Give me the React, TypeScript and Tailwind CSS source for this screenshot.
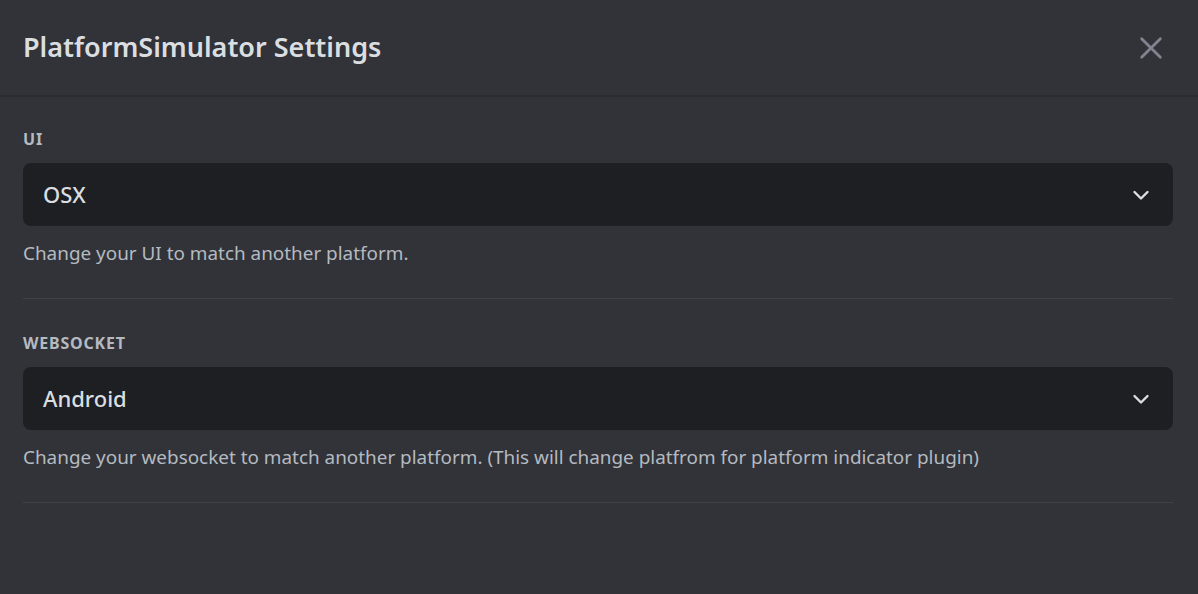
import React from "react";

function Chevron() {
  return (
    <svg width="24" height="24" viewBox="0 0 24 24" fill="none">
      <path d="M5.5 9L12 15.5L18.5 9" stroke="#dbdee1" strokeWidth="2.4" strokeLinecap="round" strokeLinejoin="round" />
    </svg>
  );
}

function Section({ label, value, note }: { label: string; value: string; note: string }) {
  return (
    <div className="border-b border-[#3f4147] pb-[33px]">
      <div className="text-[16px] font-bold leading-3 tracking-[0.05em] uppercase text-[#b5bac1]">{label}</div>
      <div className="mt-[18px] flex h-[63px] items-center justify-between rounded-[8px] bg-[#1e1f22] pl-5 pr-5">
        <span className="text-[22px] font-medium text-[#dbdee1]">{value}</span>
        <Chevron />
      </div>
      <div className="mt-[15px] text-[18.9px] leading-6 text-[#b5bac1]">{note}</div>
    </div>
  );
}

export default function App() {
  return (
    <div className="h-[594px] w-[1198px] overflow-hidden bg-[#313338] font-['Noto_Sans',sans-serif]">
      <div className="flex h-[97px] items-center justify-between border-b-2 border-[#2b2d31] pl-[23px] pr-[33px]">
        <h1 className="text-[27px] font-semibold text-[#dbdee1]">PlatformSimulator Settings</h1>
        <svg width="28" height="28" viewBox="0 0 24 24" fill="none">
          <path d="M4 4L20 20M20 4L4 20" stroke="#80848e" strokeWidth="2.4" strokeLinecap="round" />
        </svg>
      </div>
      <div className="flex flex-col gap-[38px] pl-[23px] pr-[25px] pt-[36px]">
        <Section label="UI" value="OSX" note="Change your UI to match another platform." />
        <Section
          label="Websocket"
          value="Android"
          note="Change your websocket to match another platform. (This will change platfrom for platform indicator plugin)"
        />
      </div>
    </div>
  );
}
